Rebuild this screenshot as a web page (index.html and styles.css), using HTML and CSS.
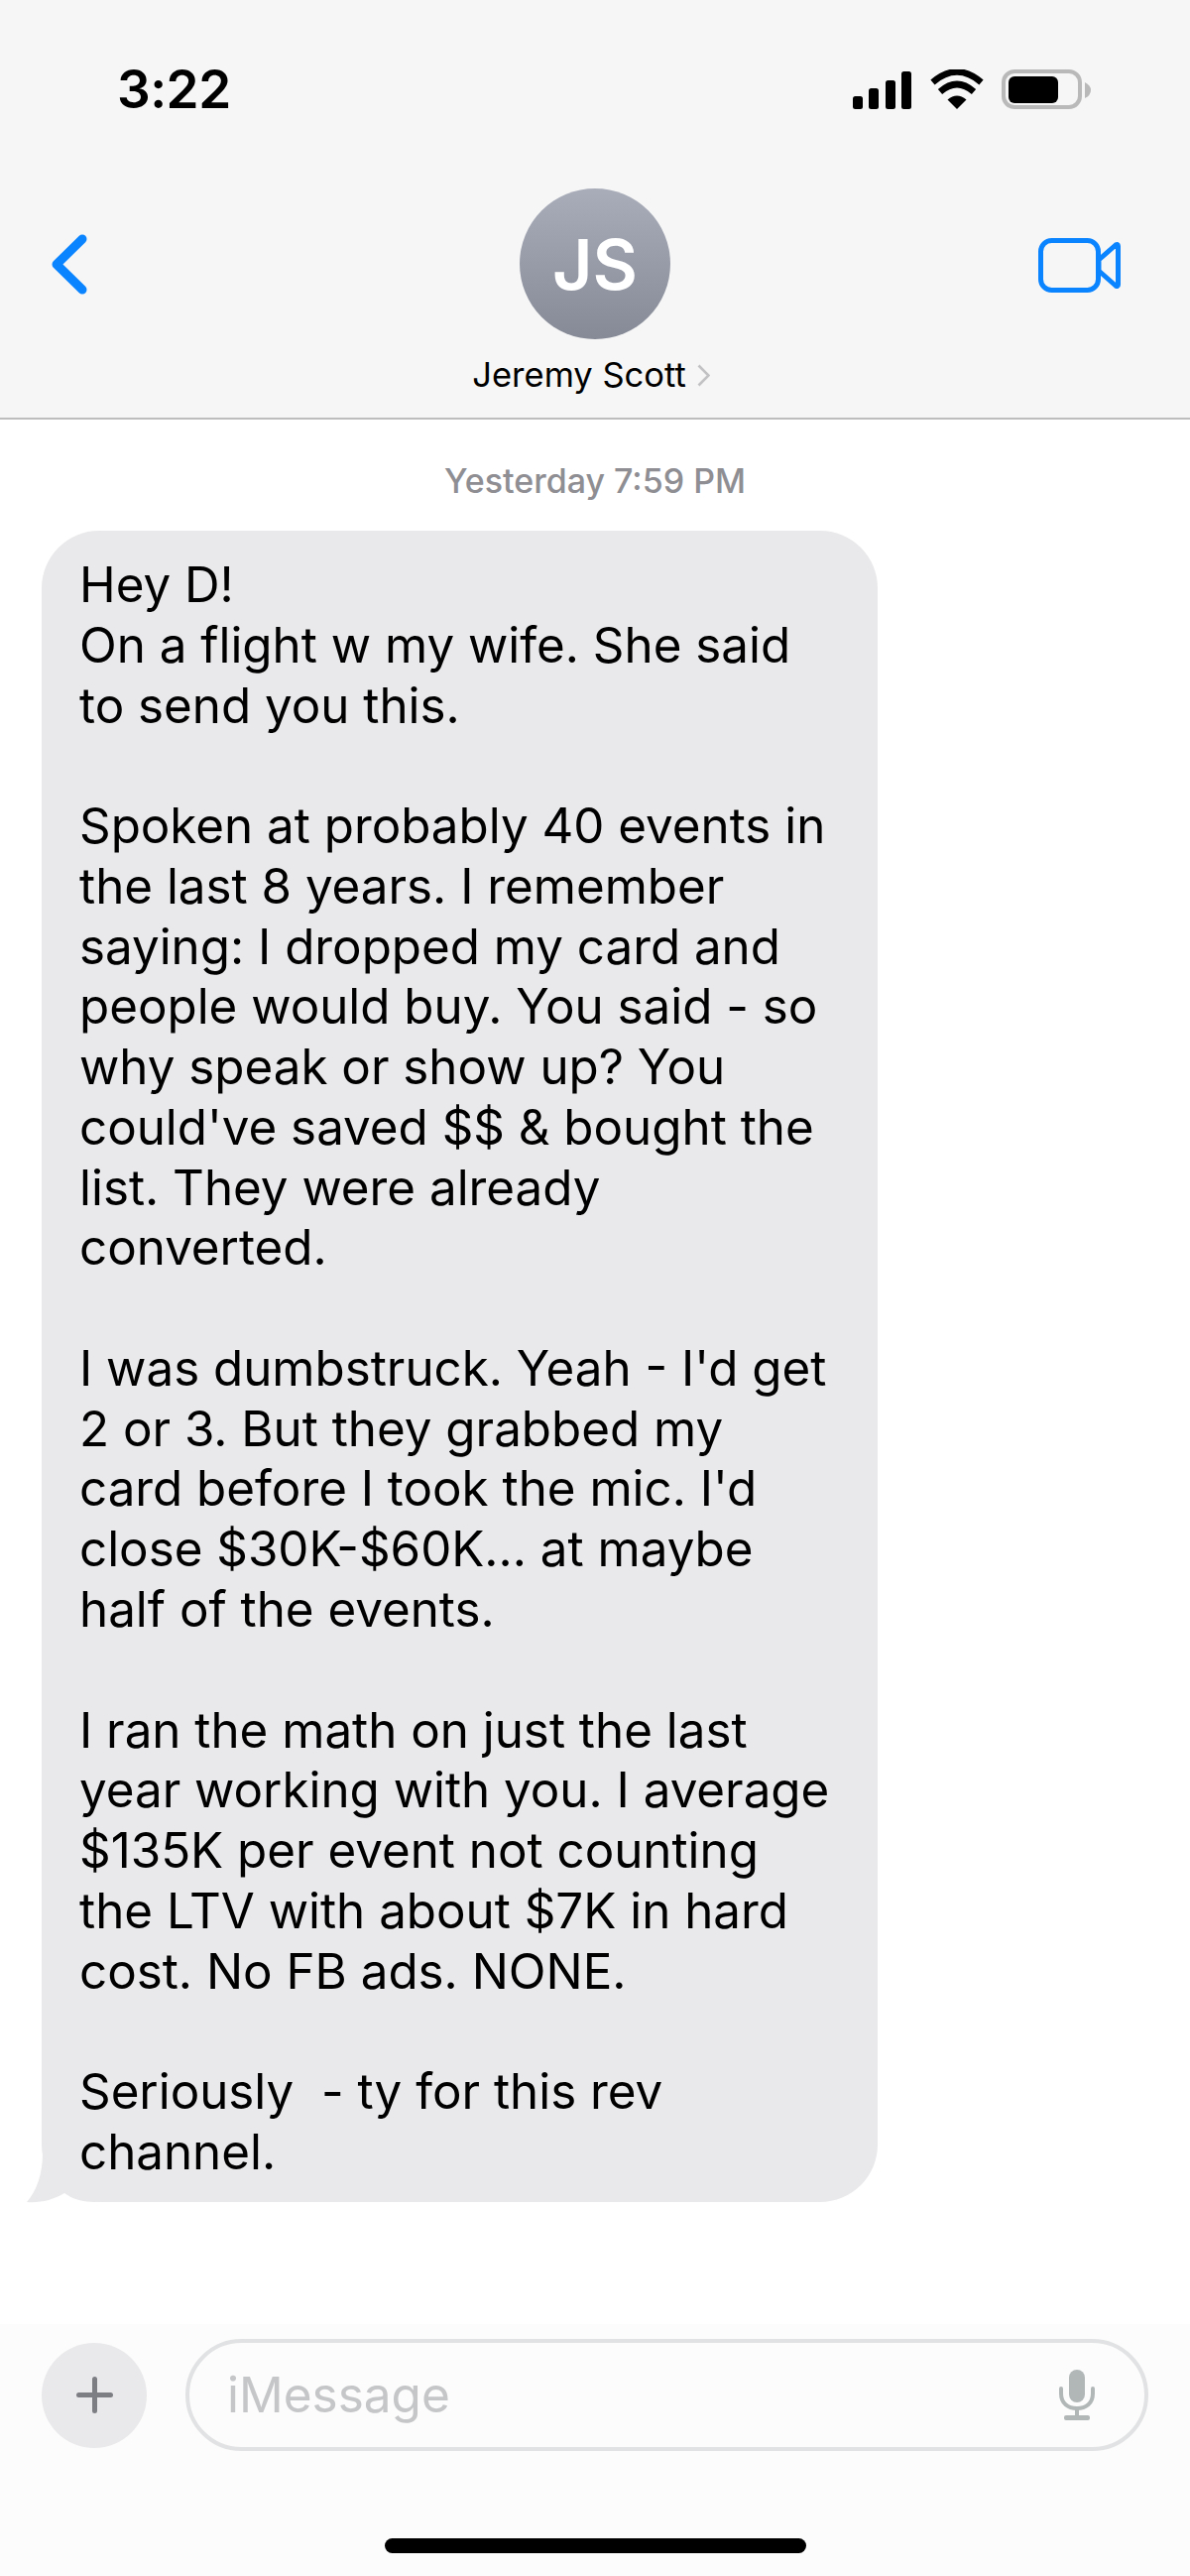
FILE: index.html
```html
<!DOCTYPE html>
<html>
<head>
	<title>Messages</title>
	<link rel="stylesheet" href="styles.css">
</head>
<body>
	<div id="phone">
		<header class="top">
			<div class="status">
				<span class="time">3:22</span>
				<div class="status-icons">
					<svg class="signal" width="59" height="38" viewBox="0 0 59 38">
						<rect x="0" y="25" width="10" height="13" rx="2.5"/>
						<rect x="16" y="17" width="10" height="21" rx="2.5"/>
						<rect x="33" y="9" width="10" height="29" rx="2.5"/>
						<rect x="49" y="0" width="10" height="38" rx="2.5"/>
					</svg>
					<svg class="wifi" width="54" height="40" viewBox="0 0 54 40">
						<path d="M27 40 L17.5 30.5 Q27 22.5 36.5 30.5 Z" fill="#000"/>
						<path d="M10 22.5 Q27 7.5 44 22.5" fill="none" stroke="#000" stroke-width="6.5"/>
						<path d="M2.5 13 Q27 -8 51.5 13" fill="none" stroke="#000" stroke-width="6.5"/>
					</svg>
					<svg class="battery" width="90" height="40" viewBox="0 0 90 40">
						<rect x="2" y="2" width="77" height="36" rx="11" fill="none" stroke="#b9b9b9" stroke-width="4"/>
						<rect x="7" y="7" width="50" height="27" rx="6" fill="#000"/>
						<path d="M84 13 Q90 16 90 21 Q90 26 84 29 Z" fill="#b9b9b9"/>
					</svg>
				</div>
			</div>
			<div class="nav">
				<svg class="back" width="36" height="61" viewBox="0 0 36 61">
					<path d="M31 5 L5 30.5 L31 56" fill="none" stroke="#0a84ff" stroke-width="9" stroke-linecap="round" stroke-linejoin="round"/>
				</svg>
				<div class="contact">
					<div class="avatar">JS</div>
					<div class="name">Jeremy Scott
						<svg class="name-arrow" width="13" height="23" viewBox="0 0 13 23">
							<path d="M1.5 1.5 L11.5 11.5 L1.5 21.5" fill="none" stroke="#c2c2c4" stroke-width="2.6"/>
						</svg>
					</div>
				</div>
				<svg class="video" width="83" height="55" viewBox="0 0 83 55">
					<rect x="2.5" y="2.5" width="58" height="50" rx="11" fill="none" stroke="#0a84ff" stroke-width="5"/>
					<path d="M61 22 L78 7 Q80.500 5.500 80.500 8 L80.500 47 Q80.500 49.500 78 48 L61 33 Z" fill="none" stroke="#0a84ff" stroke-width="5" stroke-linejoin="round"/>
				</svg>
			</div>
		</header>

		<main class="thread">
			<div class="stamp">Yesterday 7:59 PM</div>
			<div class="bubble">
				<svg class="tail" width="70" height="50" viewBox="0 0 70 50">
					<path d="M16 0 C16 20 10 38 0 49 C14 50 26 47 38 40 C46 46 56 49 70 49 L70 0 Z" fill="#e9e9eb"/>
				</svg>
				<div class="text">Hey D!
On a flight w my wife. She said
to send you this.

Spoken at probably 40 events in
the last 8 years. I remember
saying: I dropped my card and
people would buy. You said - so
why speak or show up? You
could've saved $$ &amp; bought the
list. They were already
converted.

I was dumbstruck. Yeah - I'd get
2 or 3. But they grabbed my
card before I took the mic. I'd
close $30K-$60K... at maybe
half of the events.

I ran the math on just the last
year working with you. I average
$135K per event not counting
the LTV with about $7K in hard
cost. No FB ads. NONE.

Seriously  - ty for this rev
channel.</div>
			</div>
		</main>

		<footer class="composer">
			<div class="input-row">
				<div class="plus">
					<svg width="37" height="37" viewBox="0 0 37 37">
						<path d="M18.500 2.500 V34.500 M2.500 18.500 H34.500" fill="none" stroke="#7d7e84" stroke-width="5" stroke-linecap="round"/>
					</svg>
				</div>
				<div class="input">
					<span class="placeholder">iMessage</span>
					<svg class="mic" width="36" height="51" viewBox="0 0 36 51">
						<rect x="10" y="0" width="16" height="33" rx="8" fill="#b1b6b6"/>
						<path d="M2 19 V24 C2 34 9 39 18 39 C27 39 34 34 34 24 V19" fill="none" stroke="#b1b6b6" stroke-width="4" stroke-linecap="round"/>
						<path d="M18 39 V47" stroke="#b1b6b6" stroke-width="4"/>
						<rect x="5" y="46" width="26" height="5" rx="2" fill="#b1b6b6"/>
					</svg>
				</div>
			</div>
			<div class="home-bar"></div>
		</footer>
	</div>
</body>
</html>
```

FILE: styles.css
```css
html, body {
	margin: 0;
	padding: 0;
	background: #fff;
}
#phone {
	display: flex;
	flex-direction: column;
	width: 1200px;
	height: 2597px;
	overflow: hidden;
	font-family: Inter, "Liberation Sans", sans-serif;
	color: #000;
}

/* top bar */
.top {
	box-sizing: border-box;
	height: 423px;
	background: #f6f6f6;
	border-bottom: 2px solid #bdbdbd;
}
.status {
	display: flex;
	justify-content: space-between;
	align-items: center;
	height: 40px;
	padding: 70px 100px 0 118px;
}
.time {
	font-size: 53px;
	font-weight: 600;
	line-height: 40px;
	letter-spacing: -0.5px;
}
.status-icons {
	display: flex;
	align-items: center;
	gap: 18px;
}
.signal {
	margin-top: 2px;
	margin-right: 1px;
}

.nav {
	display: grid;
	grid-template-columns: 1fr auto 1fr;
	align-items: start;
	padding: 80px 52px 0;
}
.back {
	margin-top: 46px;
}
.video {
	margin: 50px 18px 0 0;
	justify-self: end;
}
.contact {
	display: flex;
	flex-direction: column;
	align-items: center;
}
.avatar {
	display: flex;
	align-items: center;
	justify-content: center;
	width: 152px;
	height: 152px;
	border-radius: 50%;
	background: linear-gradient(#a9adba, #868a97);
	color: #fff;
	font-size: 70px;
	font-weight: 600;
}
.name {
	display: flex;
	align-items: center;
	gap: 11px;
	margin-top: 14px;
	padding-right: 8px;
	font-size: 34.500px;
	line-height: 44px;
	white-space: nowrap;
}

/* messages */
.thread {
	flex: 1;
	padding: 0 42px;
}
.stamp {
	margin-top: 42px;
	font-size: 34px;
	font-weight: 500;
	line-height: 40px;
	text-align: center;
	color: #8e8e93;
}
.bubble {
	position: relative;
	box-sizing: border-box;
	width: 843px;
	height: 1685px;
	margin-top: 30px;
	padding: 24px 20px 0 38px;
	background: #e9e9eb;
	border-radius: 58px;
}
.tail {
	position: absolute;
	left: -15px;
	bottom: -1px;
}
.text {
	position: relative;
	font-size: 49.300px;
	line-height: 60.760px;
	white-space: pre;
}

/* bottom bar */
.composer {
	height: 254px;
	background: #fcfcfc;
}
.input-row {
	display: flex;
	align-items: center;
	gap: 39px;
	padding: 15px 42px 0;
}
.plus {
	display: flex;
	align-items: center;
	justify-content: center;
	width: 106px;
	height: 106px;
	border-radius: 50%;
	background: #e9e9eb;
}
.input {
	box-sizing: border-box;
	display: flex;
	align-items: center;
	justify-content: space-between;
	width: 971px;
	height: 113px;
	padding: 0 50px 0 38px;
	border: 4px solid #e1e2e3;
	border-radius: 57px;
}
.placeholder {
	margin-top: -2px;
	font-size: 49.500px;
	color: #c5c6c8;
}
.home-bar {
	width: 425px;
	height: 15px;
	margin: 88px auto 0;
	border-radius: 8px;
	background: #000;
}
```
